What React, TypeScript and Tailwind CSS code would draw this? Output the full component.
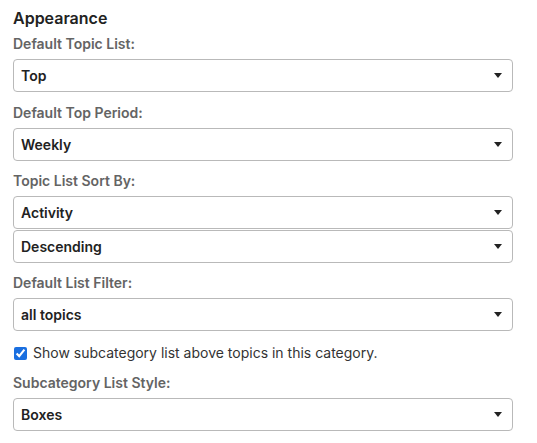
const Caret = () => (
  <svg width="8" height="5" viewBox="0 0 8 5" className="shrink-0">
    <path d="M0 0h8L4 5z" fill="#222" />
  </svg>
);

const Select = ({ value, className = "" }: { value: string; className?: string }) => (
  <div
    className={`flex h-[33px] w-[500px] items-center justify-between rounded-[4px] border border-[#b9b9b9] bg-white pl-[7px] pr-[10px] ${className}`}
  >
    <span className="text-[14px] font-semibold text-[#222]">{value}</span>
    <Caret />
  </div>
);

const Label = ({ children }: { children: string }) => (
  <div className="mb-[6px] text-[14px] leading-[18px] font-semibold text-[#646464]">{children}</div>
);

export default function App() {
  return (
    <div
      className="h-[443px] w-[537px] bg-white px-[13px] pt-[8px]"
      style={{ fontFamily: "Inter, 'Noto Sans', sans-serif" }}
    >
      <h2 className="mb-[7px] text-[16px] leading-[20px] font-semibold text-[#222]">Appearance</h2>

      <Label>Default Topic List:</Label>
      <Select value="Top" className="mb-[12px]" />

      <Label>Default Top Period:</Label>
      <Select value="Weekly" className="mb-[11px]" />

      <Label>Topic List Sort By:</Label>
      <Select value="Activity" className="mb-[1px]" />
      <Select value="Descending" className="mb-[11px]" />

      <Label>Default List Filter:</Label>
      <Select value="all topics" className="mb-[13px]" />

      <label className="mb-[12px] flex items-center gap-[6px] text-[14px] leading-[18px] text-[#333]">
        <input type="checkbox" defaultChecked className="ml-[1px] h-[13px] w-[13px] accent-[#1a6fe0]" />
        Show subcategory list above topics in this category.
      </label>

      <Label>Subcategory List Style:</Label>
      <Select value="Boxes" />
    </div>
  );
}
